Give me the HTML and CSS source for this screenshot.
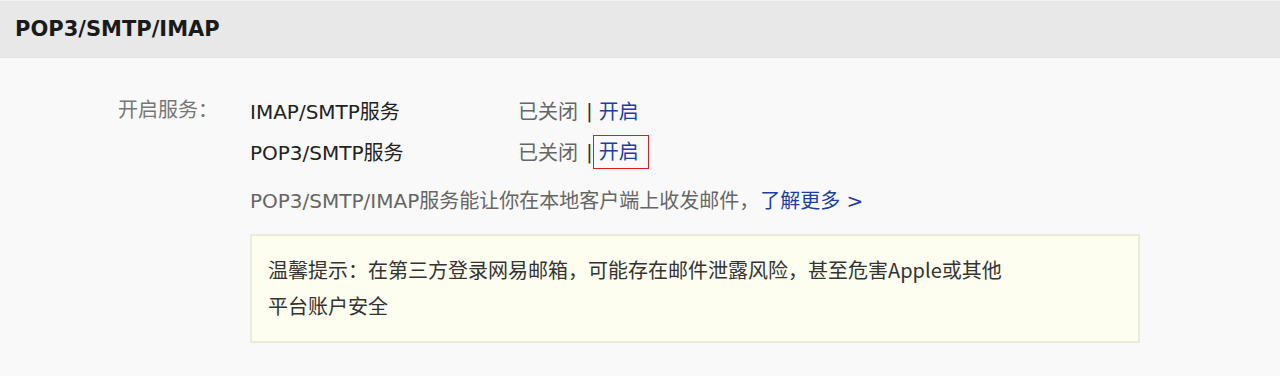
FILE: index.html
```html
<!DOCTYPE html>
<html>
	<head>
		<meta charset="UTF-8">
		<title>POP3/SMTP/IMAP</title>
		<link rel="stylesheet" href="styles.css">
	</head>
	<body>
		<div class="panel">
			<div class="panel-hd">POP3/SMTP/IMAP</div>
			<div class="panel-bd">
				<div class="label">开启服务：</div>
				<div class="main">
					<ul class="services">
						<li>
							<span class="name">IMAP/SMTP服务</span>
							<span class="status">已关闭</span>
							<span class="sep">|</span>
							<a class="link" href="#">开启</a>
						</li>
						<li>
							<span class="name">POP3/SMTP服务</span>
							<span class="status">已关闭</span>
							<span class="sep">|</span>
							<a class="link focus" href="#">开启</a>
						</li>
					</ul>
					<p class="desc">POP3/SMTP/IMAP服务能让你在本地客户端上收发邮件，<a class="link more" href="#">了解更多 &gt;</a></p>
					<div class="tips">
						温馨提示：在第三方登录网易邮箱，可能存在邮件泄露风险，甚至危害Apple或其他<br>
						平台账户安全
					</div>
				</div>
			</div>
		</div>
	</body>
</html>
```

FILE: styles.css
```css
*{
	margin: 0;
	padding: 0;
	list-style: none;
}
html{
	height: 100%;
}
body{
	height: 100%;
	overflow: hidden;
	background-color: #f9f9f9;
	font-family: "DejaVu Sans", "Noto Sans CJK SC", sans-serif;
	font-size: 20px;
	color: #222;
}
.panel-hd{
	height: 58px;
	line-height: 56px;
	padding-left: 15px;
	box-sizing: border-box;
	background-color: #e8e8e8;
	border-top: 1px solid #f2f2f2;
	border-bottom: 1px solid #e3e3e3;
	font-size: 21px;
	font-weight: bold;
	color: #1a1a1a;
}
.panel-bd{
	display: flex;
	padding: 32px 0 0 118px;
}
.label{
	width: 132px;
	line-height: 41px;
	color: #777;
}
.services li{
	display: flex;
	align-items: center;
	height: 41px;
}
.name{
	width: 268px;
	color: #222;
}
.status{
	color: #666;
}
.sep{
	margin: 0 6px 0 8px;
	color: #333;
}
.link{
	color: #1c3f9f;
	text-decoration: none;
}
.focus{
	padding: 0 8px 0 4px;
	margin: 0 -8px 0 -4px;
	outline: 1px solid #e21a1a;
	outline-offset: 1px;
	line-height: 30px;
}
.desc{
	margin-top: 9px;
	line-height: 40px;
	color: #666;
}
.more{
	margin-left: 1px;
}
.tips{
	width: 890px;
	box-sizing: border-box;
	margin-top: 13px;
	padding: 16px 16px 17px;
	background-color: #fefef0;
	border: 2px solid #ebebd6;
	font-family: "Noto Sans CJK SC", sans-serif;
	line-height: 36px;
	color: #333;
}
```
